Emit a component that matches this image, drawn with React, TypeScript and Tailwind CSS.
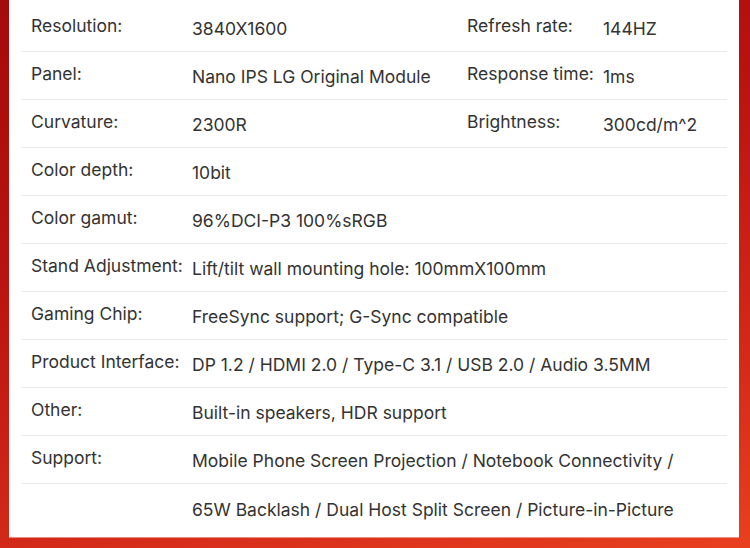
import React from "react";

type Row = { l: string; v: string; l2?: string; v2?: string };

const rows: Row[] = [
  { l: "Resolution:", v: "3840X1600", l2: "Refresh rate:", v2: "144HZ" },
  { l: "Panel:", v: "Nano IPS LG Original Module", l2: "Response time:", v2: "1ms" },
  { l: "Curvature:", v: "2300R", l2: "Brightness:", v2: "300cd/m^2" },
  { l: "Color depth:", v: "10bit" },
  { l: "Color gamut:", v: "96%DCI-P3 100%sRGB" },
  { l: "Stand Adjustment:", v: "Lift/tilt wall mounting hole: 100mmX100mm" },
  { l: "Gaming Chip:", v: "FreeSync support; G-Sync compatible" },
  { l: "Product Interface:", v: "DP 1.2 / HDMI 2.0 / Type-C 3.1 / USB 2.0 / Audio 3.5MM" },
  { l: "Other:", v: "Built-in speakers, HDR support" },
  { l: "Support:", v: "Mobile Phone Screen Projection / Notebook Connectivity /" },
];

export default function App() {
  return (
    <div
      className="w-[750px] h-[548px] overflow-hidden bg-[linear-gradient(165deg,#a30b0b_0%,#b8120f_35%,#d42a1a_75%,#e8401f_100%)]"
      style={{ fontFamily: "Inter, Roboto, 'Liberation Sans', sans-serif" }}
    >
      <div className="ml-[9px] w-[730px] h-[537px] bg-white pt-[4px] pl-[13px] pr-[12px] shadow-[0_1px_0_rgba(255,200,200,0.6)]">
        {rows.map((r, i) => (
          <div key={i} className="flex h-[48px] items-center border-b border-[#e9e9e9] text-[#333] text-[17.5px]">
            <div className="w-[170px] shrink-0 pl-[9px] -mt-[2px] whitespace-nowrap">{r.l}</div>
            <div className="w-[275px] shrink-0 mt-[3px] whitespace-nowrap">{r.v}</div>
            {r.l2 && <div className="w-[136px] shrink-0 -mt-[2px] whitespace-nowrap">{r.l2}</div>}
            {r.v2 && <div className="mt-[3px] whitespace-nowrap">{r.v2}</div>}
          </div>
        ))}
        <div className="flex h-[52px] items-center text-[#333] text-[17.5px]">
          <div className="w-[170px] shrink-0" />
          <div className="mt-[1px] whitespace-nowrap">65W Backlash / Dual Host Split Screen / Picture-in-Picture</div>
        </div>
      </div>
    </div>
  );
}
